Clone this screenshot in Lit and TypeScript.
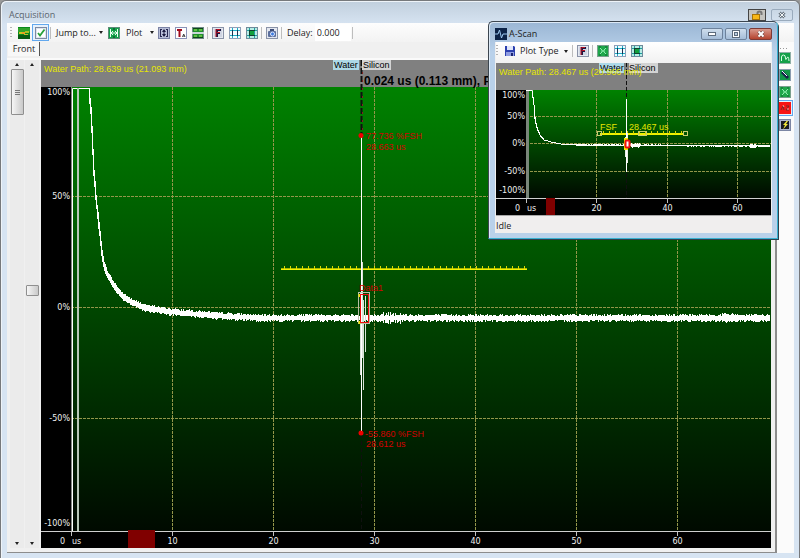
import { LitElement, html, svg, css, SVGTemplateResult } from "lit";
import { customElement, property } from "lit/decorators.js";

const frame = svg`<rect x="0.5" y="0.5" width="11" height="11" fill="#e4e8f0" stroke="#8a93a8"/>`;

const ICONS: Record<string, SVGTemplateResult> = {
  image: svg`<rect width="12" height="12" fill="#0a8a1c"/><rect y="1" width="12" height="4" fill="#2fa32a"/><rect x="1" y="5" width="3" height="2" fill="#c8c820"/><rect x="4" y="5" width="3" height="2" fill="#e8a020"/><rect x="7" y="4" width="4" height="2" fill="#a8c020"/><rect y="8" width="12" height="4" fill="#075c12"/><rect x="6" y="7" width="4" height="1" fill="#b8c030"/>`,
  check: svg`<rect x="0.5" y="0.5" width="11" height="11" fill="#dfe4ee" stroke="#7d8aa2"/><rect x="2" y="2" width="8" height="8" fill="#fff"/><path d="M3 6 L5 8.5 L9.5 2.5" fill="none" stroke="#27a13a" stroke-width="1.8"/>`,
  jump: svg`<rect x="0.5" y="0.5" width="11" height="11" fill="#12a04a" stroke="#5d8a78"/><path d="M2.5 2v8M9.5 2v8M3 6h6M5 4L3 6l2 2M7 4l2 2-2 2" fill="none" stroke="#e8fff0"/><path d="M5 2h2M5 10h2" stroke="#0a3a20"/>`,
  updown: svg`<rect x="0.5" y="0.5" width="11" height="11" fill="#b9bfd8" stroke="#7c84a6"/><path d="M2.500 2v8M9.500 2v8M2 2.500h2M8 2.500h2M2 9.500h2M8 9.500h2" stroke="#26264e"/><path d="M6 2L8 5H4zM6 10L8 7H4z" fill="#1c1c40"/><path d="M6 3v6" stroke="#1c1c40"/>`,
  text: svg`<rect x="0.5" y="0.5" width="11" height="11" fill="#fff" stroke="#8a93b8"/><path d="M2 3h5M4.5 3v7" stroke="#a00a1c" stroke-width="2"/><path d="M7.5 10l1.2-3 1.3 3M8 9h2" fill="none" stroke="#444"/>`,
  bars: svg`<rect x="0.5" y="0.5" width="11" height="11" fill="#1f8f2c" stroke="#6f8a86"/><rect x="0" y="5" width="12" height="2" fill="#c9d6d8"/><path d="M2 3h3M7 3h3M2 9h3M7 9h3" stroke="#a8f060"/><path d="M1 1.500h10M1 10.500h10" stroke="#0d4618"/>`,
  letterF: svg`${frame}<rect x="2" y="2" width="8" height="8" fill="#cfd4e2"/><path d="M5 2v8M4 3h5M5 6h3" stroke="#1a1440" stroke-width="2"/><path d="M4 2v8M5 2.500h3M5 5.500h3" stroke="#c01020" fill="none"/>`,
  gridLight: svg`<rect x="0.5" y="0.5" width="11" height="11" fill="#f2fbff" stroke="#8fa0b8"/><path d="M3.500 1v10M8.500 1v10M1 3.500h10M1 8.500h10" stroke="#18b0c8"/><path d="M3.500 3v6M8.500 3v6" stroke="#1c3050"/>`,
  gridGreen: svg`<rect x="0.5" y="0.5" width="11" height="11" fill="#b8ece4" stroke="#6f8a9a"/><rect x="3" y="3" width="6" height="6" fill="#12a03c"/><path d="M3.500 1v10M8.500 1v10M1 3.500h10M1 8.500h10" stroke="#20a0a0"/><path d="M3 3.500h6M3 8.500h6M3.500 3v6" stroke="#104030"/>`,
  camera: svg`${frame}<rect x="2" y="4" width="8" height="6" rx="1" fill="#5b6e9c"/><rect x="4" y="2" width="4" height="2" fill="#3c4c78"/><circle cx="6.500" cy="7" r="2" fill="#3f7de0" stroke="#dbe6ff"/>`,
  save: svg`<path d="M1 1h9l1 1v9H1z" fill="#2b3fae"/><rect x="3" y="1" width="6" height="4" fill="#dfe6fa"/><rect x="2" y="7" width="8" height="4" fill="#8f9ce0"/><rect x="7" y="8" width="2" height="3" fill="#1a2470"/>`,
  cross: svg`<rect x="0.5" y="0.5" width="11" height="11" fill="#1ea64a" stroke="#7aa08e"/><path d="M3 3l2 2v2L3 9M9 3L7 5v2l2 2M5 6h2" fill="none" stroke="#8ff0b0"/><path d="M2 2h2M8 2h2M2 10h2M8 10h2" stroke="#0c6a30"/>`,
  wave: svg`<rect x="0.5" y="0.5" width="11" height="11" fill="#14a04a" stroke="#8fb0a8"/><path d="M2.500 9V5q0-2 2-2t2 3 1.500 0 2 3" fill="none" stroke="#d8ffe4"/>`,
  probe: svg`<rect x="0.5" y="0.5" width="11" height="11" fill="#119648" stroke="#8a9cb0"/><path d="M3 3l6 6" stroke="#16204a" stroke-width="3"/><path d="M3 2l5 5" stroke="#f0f6ff"/>`,
  redWave: svg`<rect width="12" height="12" fill="#f81414"/><path d="M2 8l2-4 1 4M7 4h3L7 8h3" fill="none" stroke="#7a2a2a"/><path d="M4 3l1 2M8 7h2" stroke="#f7a0a0"/>`,
  bolt: svg`<rect x="0.5" y="0.5" width="11" height="11" fill="#aeb6d2" stroke="#7c86a4"/><rect x="2" y="2" width="8" height="8" fill="#1a1a24"/><path d="M8 1.500L4 6h2L4 10.500 9 5H7l2-3z" fill="#f2e63a"/>`,
  scan: svg`<rect width="12" height="12" fill="#0c2348"/><path d="M0 6h3l1.500-4 2 8L8 6h4" fill="none" stroke="#9cc8f0"/>`,
};

@customElement("ui-icon")
class UiIcon extends LitElement {
  @property() name = "image";
  static styles = css`
    :host { display: block; width: 12px; height: 12px; flex: none; }
    svg { display: block; }
  `;
  render() {
    return html`<svg width="12" height="12" viewBox="0 0 12 12" aria-hidden="true">${ICONS[this.name]}</svg>`;
  }
}

function noise(seed: number) {
  let s = seed;
  return () => {
    s = (s * 1103515245 + 12345) % 2147483648;
    return s / 2147483648;
  };
}

function lerp(points: number[][], x: number) {
  for (let i = 1; i < points.length; i++) {
    const [x0, y0] = points[i - 1];
    const [x1, y1] = points[i];
    if (x <= x1) return y0 + ((y1 - y0) * (x - x0)) / (x1 - x0);
  }
  return points[points.length - 1][1];
}

/** A vertical min/max stroke for every sample column of the signal. */
function trace(points: number[][], from: number, to: number, amp: (x: number) => number, seed: number) {
  const rnd = noise(seed);
  let d = "";
  for (let x = from; x < to; x++) {
    const y = lerp(points, x);
    const y2 = lerp(points, x + 1);
    const a = amp(x);
    const top = Math.round(Math.min(y, y2) - a * (0.5 + rnd() * 0.5));
    const bottom = Math.round(Math.max(y, y2) + a * (0.5 + rnd() * 0.5));
    d += `M${x + 0.5} ${top}V${Math.max(bottom, top + 1)}`;
  }
  return d;
}

const chartStyles = css`
  :host { display: block; }
  svg { display: block; width: 100%; height: auto; }
  .sans { font-family: "Liberation Sans", Arial, sans-serif; font-size: 9px; }
  .axis { font-family: "DejaVu Sans", Verdana, sans-serif; font-size: 8px; fill: #f0f0f0; }
  .end { text-anchor: end; }
  .mid { text-anchor: middle; }
  .yellow { fill: #e6e600; }
  .red { fill: #d40000; }
  .headline { font-family: "Liberation Sans", Arial, sans-serif; font-size: 12px; font-weight: 700; }
  .grid { stroke: #93964a; stroke-dasharray: 3 1; fill: none; }
  .signal { stroke: #fff; fill: none; }
`;

@customElement("main-plot")
class MainPlot extends LitElement {
  static styles = chartStyles;
  render() {
    const X = (us: number) => Math.round(30 + 10.1 * us) + 0.5;
    const Y = (p: number) => Math.round(247 - 2.22 * p) + 0.5;
    const curve = [
      [48, 32], [50, 50], [51, 70], [53, 112], [55, 138], [57, 156], [59, 174], [61, 192], [63, 205], [66, 213], [72, 224],
      [81, 236], [92, 243], [105, 248], [131, 252], [180, 256], [220, 258], [730, 258],
    ];
    const amp = (x: number) => {
      if (x < 66) return 4;
      if (x > 341 && x < 360) return 3 + 4 * Math.abs(Math.sin(x * 1.3));
      if (x > 680 && x < 698) return 5;
      return 4;
    };
    let ticks = "";
    for (let x = 243; x < 486; x += 6) ticks += `M${x + 0.5} 206V209`;
    return html`<svg viewBox="0 0 730 488" role="img" aria-label="Acquisition signal">
      <defs>
        <linearGradient id="g" x1="0" y1="0" x2="0" y2="1">
          <stop offset="0" stop-color="#008200" /><stop offset="1" stop-color="#000a00" />
        </linearGradient>
      </defs>
      <rect width="730" height="488" fill="#000" />
      <rect width="730" height="27" fill="#808080" />
      <rect x="30" y="27" width="700" height="444" fill="url(#g)" />
      ${[10, 20, 30, 40, 50, 60].map((t) => svg`<path class="grid" d="M${X(t)} 27V471"/>`)}
      ${[50, 0, -50].map((p) => svg`<path class="grid" d="M30 ${Y(p)}H730"/>`)}
      <path d="M30.500 27V471" stroke="#808880" />
      <path d="M31.500 471V28.500H49" class="signal" />
      <path d="M37 28V471" stroke="#b8c8b8" stroke-width="2" />
      <path class="signal" d=${trace(curve, 48, 729, amp, 7)} />
      <path d="M240 209.500H486" stroke="#f4f400" />
      <path d="M240 208.500H486" stroke="#a8b400" />
      <path d=${ticks} stroke="#d8d800" />
      <path d="M320.500 0V76" stroke="#101010" stroke-width="2" stroke-dasharray="6 2" />
      <path d="M320.500 374V471" stroke="#101010" stroke-dasharray="4 3" />
      <path d="M321.500 12V76" stroke="#802020" stroke-dasharray="2 6" />
      <path d="M320.500 76V373" class="signal" />
      <path d="M322.500 240V330M319.500 232V315M324.500 236V292M321.500 202V298" stroke="#d8e4d8" />
      <rect x="317.500" y="232.500" width="11" height="31" fill="none" stroke="#b8c0a8" />
      <path d="M318.500 234V264" stroke="#f0e000" stroke-width="2" stroke-dasharray="3 24" />
      <rect x="319.500" y="234.500" width="8" height="28" fill="none" stroke="#f01010" />
      <circle cx="320" cy="75.500" r="2.500" fill="#f00000" />
      <circle cx="320" cy="373" r="2.500" fill="#f00000" />
      <text class="sans red" x="325" y="79">77.736 %FSH</text>
      <text class="sans red" x="325" y="90">28.663 us</text>
      <text class="sans red" x="324" y="377">-55.860 %FSH</text>
      <text class="sans red" x="325" y="387">28.612 us</text>
      <text class="sans red" x="318" y="231">Data1</text>
      <text class="sans yellow" x="3" y="12">Water Path: 28.639 us (21.093 mm)</text>
      <rect x="292" width="26" height="10" fill="#add8e6" />
      <text class="sans" x="293" y="8">Water</text>
      <rect x="321" width="29" height="10" fill="#d3d3d3" />
      <text class="sans" x="322" y="8">Silicon</text>
      <text class="headline" x="323" y="25">0.024 us (0.113 mm), Peak</text>
      <path d="M0 471.500H730" stroke="#d0d0d0" />
      ${[0, 10, 20, 30, 40, 50, 60].map((t) => svg`<path d="M${X(t)} 472V476" stroke="#c0c0c0"/>`)}
      <rect x="87" y="470" width="27" height="18" fill="#800000" />
      <text class="axis end" x="29" y="35">100%</text>
      ${[50, 0, -50].map((p) => svg`<text class="axis end" x="29" y=${Y(p) + 2.5}>${p}%</text>`)}
      <text class="axis end" x="29" y="466">-100%</text>
      <text class="axis" x="19" y="484">0</text>
      <text class="axis" x="31" y="484">us</text>
      ${[10, 20, 30, 40, 50, 60].map((t) => svg`<text class="axis mid" x=${X(t)} y="484">${t}</text>`)}
    </svg>`;
  }
}

@customElement("scan-plot")
class ScanPlot extends LitElement {
  static styles = chartStyles;
  render() {
    const X = (us: number) => Math.round(30 + 3.52 * us) + 0.5;
    const Y = (p: number) => Math.round(80 - 0.55 * p) + 0.5;
    const curve = [[36, 28], [38, 42], [39, 55], [41, 65], [44, 72], [48, 77], [55, 79], [65, 81], [80, 82], [276, 83]];
    const amp = (x: number) => {
      if (x < 80) return 0.6;
      if (x > 134 && x < 144) return 2.5;
      if (x > 253 && x < 260) return 2.5;
      return 1;
    };
    let ticks = "";
    for (let x = 107; x < 190; x += 6) ticks += `M${x + 0.5} 68V71`;
    return html`<svg viewBox="0 0 275 152" role="img" aria-label="A-Scan signal">
      <defs>
        <linearGradient id="g" x1="0" y1="0" x2="0" y2="1">
          <stop offset="0" stop-color="#008200" /><stop offset="1" stop-color="#000a00" />
        </linearGradient>
      </defs>
      <rect width="275" height="152" fill="#000" />
      <rect width="275" height="27" fill="#808080" />
      <rect x="30" y="27" width="245" height="108" fill="url(#g)" />
      ${[20, 40, 60].map((t) => svg`<path class="grid" d="M${X(t)} 27V135"/>`)}
      ${[50, 0, -50].map((p) => svg`<path class="grid" d="M30 ${Y(p)}H275"/>`)}
      <path d="M31.500 27V135" stroke="#7a867a" stroke-width="3" />
      <path d="M30 27.500H36.500V30" class="signal" />
      <path class="signal" d=${trace(curve, 36, 274, amp, 11)} />
      <path d="M104 71H188" stroke="#f0f000" stroke-width="2" />
      <path d=${ticks} stroke="#d8d800" />
      <g fill="none" stroke="#c8cc70">
        <rect x="101.500" y="68.500" width="4" height="4" />
        <rect x="142.500" y="68.500" width="8" height="4" />
        <rect x="187.500" y="68.500" width="4" height="4" />
      </g>
      <path d="M130.500 0V36M130.500 110V135" stroke="#101010" stroke-dasharray="4 2" />
      <path d="M130.500 36V109" class="signal" />
      <path d="M131.500 70V100M129.500 74V94" stroke="#e8f0e8" />
      <rect x="128" y="75" width="4" height="12" fill="#f4e800" />
      <rect x="129.500" y="77.500" width="4" height="7" rx="1" fill="#fff" stroke="#f01010" stroke-width="2" />
      <rect x="103" width="25" height="10" fill="#add8e6" />
      <text class="sans" x="104" y="8">Water</text>
      <rect x="133" width="29" height="10" fill="#d3d3d3" />
      <text class="sans" x="133" y="8">Silicon</text>
      <text class="sans yellow" x="3" y="12">Water Path: 28.467 us (20.966 mm)</text>
      <text class="sans yellow" x="104" y="67">FSF</text>
      <text class="sans yellow" x="133" y="67">28.467 us</text>
      <path d="M0 135.500H275" stroke="#d0d0d0" />
      ${[0, 20, 40, 60].map((t) => svg`<path d="M${X(t)} 136V140" stroke="#c0c0c0"/>`)}
      <rect x="50" y="135" width="9" height="17" fill="#800000" />
      <text class="axis end" x="29" y="35">100%</text>
      ${[50, 0, -50].map((p) => svg`<text class="axis end" x="29" y=${Y(p) + 2.5}>${p}%</text>`)}
      <text class="axis end" x="29" y="130">-100%</text>
      <text class="axis" x="19" y="148">0</text>
      <text class="axis" x="31" y="148">us</text>
      ${[20, 40, 60].map((t) => svg`<text class="axis mid" x=${X(t)} y="148">${t}</text>`)}
    </svg>`;
  }
}

const chrome = css`
  :host { font-family: "Open Sans", "Noto Sans", sans-serif; font-size: 9px; line-height: 12px; color: #222; }
  * { box-sizing: border-box; }
  button, input { font: inherit; color: inherit; border: 0; padding: 0; margin: 0; background: none; }
  .toolbar { display: flex; align-items: center; height: 19px; padding-left: 3px; }
  .grip { width: 2px; height: 12px; margin-right: 3px; background: repeating-linear-gradient(#b4b4b4 0 1px, transparent 1px 3px); }
  .tool { display: flex; align-items: center; justify-content: center; width: 17px; height: 17px; flex: none; }
  .on { border: 1px solid #62a8ee; background: #e6f1fc; }
  .sep { width: 1px; height: 12px; margin: 0 1px; background: #bdbdbd; flex: none; }
  .menu { display: flex; align-items: center; justify-content: space-between; white-space: nowrap; }
  .caret { width: 0; height: 0; border: 2px solid transparent; border-top: 3px solid #222; border-bottom: 0; }
`;

@customElement("scan-window")
class ScanWindow extends LitElement {
  static styles = [
    chrome,
    css`
      :host { display: block; }
      .window { border: 1px solid #3c4650; border-right-color: #37b0d0; border-bottom-color: #37b0d0; border-radius: 5px 5px 0 0;
        padding: 0 5px 5px 6px; background: linear-gradient(#9ab6d4, #b9d1ea 30px); box-shadow: inset 1px 1px 0 #dce9f6, 1px 1px 0 #30404c; }
      .title { display: flex; align-items: center; height: 20px; padding-top: 3px; gap: 2px; }
      .title h2 { flex: 1; margin: 0; font-size: 9px; font-weight: 400; }
      .title button { display: flex; align-items: center; justify-content: center; width: 22px; height: 12px; border: 1px solid #6d829c; border-radius: 2px;
        background: linear-gradient(#cfdeed, #a5bdd8); }
      .controls { display: flex; gap: 2px; }
      .title .close { width: 23px; background: linear-gradient(#d9998c, #b5432e); border-color: #7c3a36; }
      .toolbar { background: linear-gradient(#fff, #f1f1f1); height: 21px; padding: 0 0 3px; }
      .type { width: 48px; margin: 0 3px 0 2px; }
      .body { background: #f0f0f0; padding: 0 1px; }
      .status { height: 18px; margin: 0; padding: 4px 0 0; border-top: 1px solid #a8a8a8; background: #f0eeee; line-height: 12px; }
      svg { display: block; }
    `,
  ];
  render() {
    return html`<section class="window" aria-label="A-Scan">
      <header class="title">
        <ui-icon name="scan"></ui-icon>
        <h2>A-Scan</h2>
        <div class="controls">
          <button aria-label="Minimize"><svg width="8" height="4"><rect x="0.5" y="0.5" width="7" height="3" fill="#fff" stroke="#5c6b7c" /></svg></button>
          <button aria-label="Maximize"><svg width="8" height="8"><rect x="1.500" y="1.500" width="5" height="5" fill="none" stroke="#5c6b7c" stroke-width="3" /><rect x="1.500" y="1.500" width="5" height="5" fill="none" stroke="#fff" /></svg></button>
          <button class="close" aria-label="Close"><svg width="8" height="8"><path d="M1.500 1.500l5 5M6.500 1.500l-5 5" stroke="#5a3634" stroke-width="3" /><path d="M1.500 1.500l5 5M6.500 1.500l-5 5" stroke="#fff" stroke-width="2" /></svg></button>
        </div>
      </header>
      <div class="body">
        <div class="toolbar">
          <span class="grip"></span>
          <button class="tool" aria-label="Save"><ui-icon name="save"></ui-icon></button>
          <button class="menu type">Plot Type<span class="caret"></span></button>
          <span class="sep"></span>
          <button class="tool" aria-label="Freeze"><ui-icon name="letterF"></ui-icon></button>
          <span class="sep"></span>
          <button class="tool" aria-label="Fit"><ui-icon name="cross"></ui-icon></button>
          <button class="tool" aria-label="Grid"><ui-icon name="gridLight"></ui-icon></button>
          <button class="tool" aria-label="Gates"><ui-icon name="gridGreen"></ui-icon></button>
        </div>
        <scan-plot></scan-plot>
        <p class="status">Idle</p>
      </div>
    </section>`;
  }
}

@customElement("app-root")
class AppRoot extends LitElement {
  static styles = [
    chrome,
    css`
      :host { display: block; position: relative; background: #9a9a9a; }
      .window { min-height: 100vh; border: 1px solid #77797c; border-width: 1px 1px 0 1px; border-radius: 6px 6px 0 0;
        padding: 0 5px 5px 6px; background: linear-gradient(#c1cfdd, #d7e4f2 24px); box-shadow: inset 1px 1px 0 #eef3f8; }
      .title { display: flex; align-items: flex-end; height: 22px; padding: 0 1px 2px 2px; gap: 5px; }
      .title h1 { flex: 1; margin: 0; font-size: 9px; line-height: 12px; font-weight: 400; color: #5a646e; }
      .title button { display: flex; align-items: center; justify-content: center; width: 22px; height: 12px; border: 1px solid #9aabbd; border-radius: 2px; }
      .title .lock { width: 18px; height: 12px; border: 1px solid #444; border-radius: 0; background: #c4c4c0; }
      .client { background: #f0f0f0; }
      .main { background: linear-gradient(#fdfdfd, #f3f3f3); }
      .jump { width: 47px; margin: 0 2px 0 4px; }
      .plot { width: 28px; margin: 0 1px 0 4px; }
      .delay { margin: 0 2px 0 4px; }
      .field { width: 36px; height: 17px; padding-left: 2px; background: #fff; }
      .split { display: flex; }
      .panel { flex: 1; min-width: 0; }
      .tabs { display: flex; height: 18px; padding-left: 1px; border-bottom: 2px solid #fafafa; }
      .tab { width: 32px; height: 14px; padding-left: 1px; border-right: 1px solid #555; background: #f8f8f8; }
      .work { display: flex; border-right: 2px solid #8c8c8c; border-bottom: 1px solid #8c8c8c; padding: 0 4px 4px 0; background: #f0f0f0; }
      .sliders { display: flex; gap: 1px; width: 34px; padding: 0 2px 0 3px; flex: none; }
      .slider { display: flex; flex-direction: column; flex: 1; background: #ebebeb; }
      .arrow { display: flex; justify-content: center; align-items: center; height: 9px; }
      .up { transform: rotate(180deg); }
      .slider input { writing-mode: vertical-lr; appearance: none; width: 100%; height: 0; min-height: 0; flex: 1; }
      .slider input::-webkit-slider-thumb { appearance: none; width: 13px; height: 11px; border: 1px solid #8f8f8f; border-radius: 1px;
        background: linear-gradient(90deg, #f6f6f6, #c9c9c9); }
      .slider .long::-webkit-slider-thumb { height: 46px;
        background: repeating-linear-gradient(#777 0 1px, transparent 1px 2px) center / 5px 5px no-repeat, linear-gradient(90deg, #f6f6f6, #c9c9c9); }
      main-plot { flex: 1; min-width: 0; }
      .side { display: flex; flex-direction: column; align-items: flex-start; width: 17px; flex: none; padding-top: 6px; background: #fbfbfb; }
      .side .tool { width: 16px; }
      .side .on { height: 16px; }
      .dots { width: 8px; height: 1px; margin-left: 3px; background: repeating-linear-gradient(90deg, #999 0 1px, transparent 1px 3px); }
      .float { position: absolute; top: 21px; right: 22px; width: 290px; }
      svg { display: block; }
    `,
  ];
  render() {
    return html`<div class="window">
        <header class="title">
          <h1>Acquisition</h1>
          <button class="lock" aria-label="Unlock">
            <svg width="14" height="11"><path d="M7.500 6V3q0-1.500 2-1.500t2 1.500v2" fill="none" stroke="#777" stroke-width="2" /><rect x="2.500" y="4.500" width="7" height="5" fill="#f8b818" stroke="#a87408" /></svg>
          </button>
          <button aria-label="Close">
            <svg width="8" height="8"><path d="M1.500 1.500l5 5M6.500 1.500l-5 5" stroke="#6c7884" stroke-width="3" /><path d="M1.500 1.500l5 5M6.500 1.500l-5 5" stroke="#f4f6f8" /></svg>
          </button>
        </header>
        <div class="client">
          <div class="toolbar main">
            <span class="grip"></span>
            <button class="tool" aria-label="Image"><ui-icon name="image"></ui-icon></button>
            <button class="tool on" aria-label="Enable"><ui-icon name="check"></ui-icon></button>
            <span class="sep"></span>
            <button class="menu jump">Jump to...<span class="caret"></span></button>
            <button class="tool" aria-label="Center"><ui-icon name="jump"></ui-icon></button>
            <button class="menu plot">Plot<span class="caret"></span></button>
            <button class="tool" aria-label="Vertical fit"><ui-icon name="updown"></ui-icon></button>
            <button class="tool" aria-label="Text"><ui-icon name="text"></ui-icon></button>
            <button class="tool" aria-label="Layers"><ui-icon name="bars"></ui-icon></button>
            <span class="sep"></span>
            <button class="tool" aria-label="Freeze"><ui-icon name="letterF"></ui-icon></button>
            <button class="tool" aria-label="Grid"><ui-icon name="gridLight"></ui-icon></button>
            <button class="tool" aria-label="Gates"><ui-icon name="gridGreen"></ui-icon></button>
            <span class="sep"></span>
            <button class="tool" aria-label="Snapshot"><ui-icon name="camera"></ui-icon></button>
            <span class="sep"></span>
            <label class="delay" for="delay">Delay:</label>
            <input class="field" id="delay" value="0.000" />
            <span class="sep"></span>
          </div>
          <div class="split">
            <div class="panel">
              <div class="tabs"><button class="tab">Front</button></div>
              <div class="work">
                <div class="sliders">
                  <div class="slider">
                    <button class="arrow" aria-label="Up"><span class="caret up"></span></button>
                    <input class="long" type="range" min="0" max="100" value="0" aria-label="Gain" />
                    <button class="arrow" aria-label="Down"><span class="caret"></span></button>
                  </div>
                  <div class="slider">
                    <button class="arrow" aria-label="Up"><span class="caret up"></span></button>
                    <input type="range" min="0" max="100" value="47" aria-label="Offset" />
                    <button class="arrow" aria-label="Down"><span class="caret"></span></button>
                  </div>
                </div>
                <main-plot></main-plot>
              </div>
            </div>
            <div class="side">
              <span class="dots"></span>
              <button class="tool" aria-label="Wave"><ui-icon name="wave"></ui-icon></button>
              <button class="tool" aria-label="Probe"><ui-icon name="probe"></ui-icon></button>
              <button class="tool" aria-label="Fit"><ui-icon name="cross"></ui-icon></button>
              <button class="tool on" aria-label="Record"><ui-icon name="redWave"></ui-icon></button>
              <button class="tool" aria-label="Trigger"><ui-icon name="bolt"></ui-icon></button>
            </div>
          </div>
        </div>
      </div>
      <scan-window class="float"></scan-window>`;
  }
}
